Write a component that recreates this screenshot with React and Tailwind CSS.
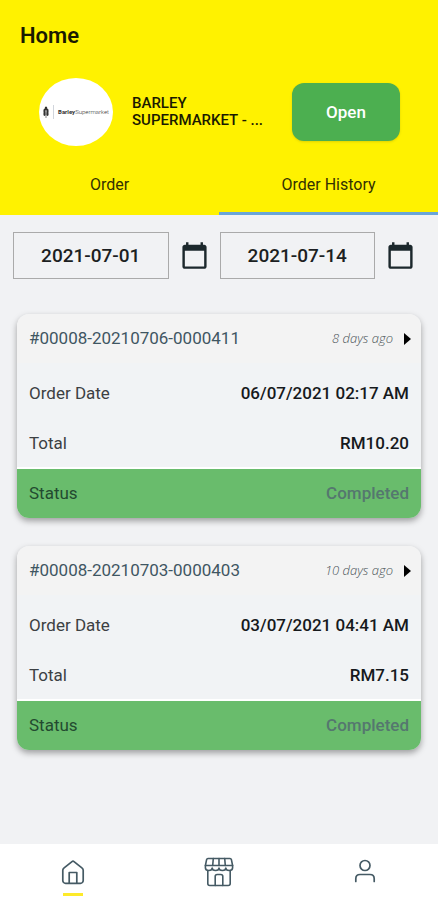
import { useState } from 'react';
import { MdCalendarToday } from 'react-icons/md';

const orders = [
  {
    id: '#00008-20210706-0000411',
    age: '8 days ago',
    date: '06/07/2021 02:17 AM',
    total: 'RM10.20',
    status: 'Completed',
  },
  {
    id: '#00008-20210703-0000403',
    age: '10 days ago',
    date: '03/07/2021 04:41 AM',
    total: 'RM7.15',
    status: 'Completed',
  },
];

const HomeIcon = () => (
  <svg viewBox="0 0 24 26" className="h-[26px] w-6" fill="none" stroke="currentColor" strokeWidth="1.7" strokeLinejoin="round" strokeLinecap="round">
    <path d="M1.800 11.200c0-.9.300-1.500 1-2L11 2.600a1.600 1.600 0 0 1 2 0l8.200 6.600c.7.5 1 1.100 1 2v10.300a2.800 2.800 0 0 1-2.800 2.800H4.600a2.800 2.800 0 0 1-2.800-2.800z" />
    <path d="M8.200 24V13.500h7.600V24" />
  </svg>
);

const StoreIcon = () => (
  <svg viewBox="0 0 30 30" className="size-[30px]" fill="none" stroke="currentColor" strokeWidth="1.6" strokeLinejoin="round" strokeLinecap="round">
    <path d="M4 1.500h22c.8 0 1.200.3 1.400 1.200l1.200 5.800H1.400l1.200-5.800C2.800 1.800 3.200 1.500 4 1.500z" />
    <path d="M9.300 1.500 8.700 8.500M15 1.500v7M20.700 1.500l.6 7" />
    <path d="M1.400 8.500v2.300c0 1.700 1.400 2.700 3.400 2.700s3.400-1 3.400-2.400c0 1.400 1.400 2.400 3.400 2.400s3.400-1 3.400-2.400c0 1.400 1.400 2.400 3.400 2.400s3.400-1 3.400-2.400c0 1.400 1.400 2.400 3.400 2.400s3.400-1 3.400-2.700V8.500" />
    <path d="M3.800 13.500v13c0 1.200.7 2 2 2h18.400c1.300 0 2-.8 2-2v-13" />
    <path d="M11.200 28.500V19.500a2 2 0 0 1 2-2h3.600a2 2 0 0 1 2 2v9" />
  </svg>
);

const UserIcon = () => (
  <svg viewBox="0 0 24 26" className="h-[26px] w-6" fill="none" stroke="currentColor" strokeWidth="1.7" strokeLinecap="round">
    <circle cx="12" cy="6.500" r="5" />
    <path d="M2.800 22.500v-2.800c0-2.600 1.600-4.200 4.200-4.200h10c2.600 0 4.200 1.600 4.200 4.200v2.800" />
  </svg>
);

const StoreLogo = () => (
  <div className="flex h-[68px] w-[74px] shrink-0 items-center justify-center gap-1 rounded-[50%] bg-white text-[#333]">
    <svg viewBox="0 0 6 12" className="h-3 w-1.5" fill="currentColor">
      <ellipse cx="3" cy="2.500" rx="1.300" ry="2" />
      <ellipse cx="1.500" cy="5" rx="1.100" ry="2.200" />
      <ellipse cx="4.500" cy="5" rx="1.100" ry="2.200" />
      <ellipse cx="1.500" cy="8" rx="1.100" ry="2" />
      <ellipse cx="4.500" cy="8" rx="1.100" ry="2" />
      <path d="M2.700 6h.6v6h-.6z" />
    </svg>
    <span className="h-3.5 w-px bg-gray-300" />
    <span className="text-[6px] leading-none font-light">
      <b className="font-bold">Barley</b>Supermarket
    </span>
  </div>
);

const Tab = ({ label, active, onClick }) => (
  <button
    type="button"
    role="tab"
    aria-selected={active}
    onClick={onClick}
    className={`h-[60px] flex-1 border-b-[3px] pt-0.5 text-base text-[#333000] ${active ? 'border-[#6aa5d8]' : 'border-transparent'}`}
  >
    {label}
  </button>
);

const DateField = ({ label, value, onChange }) => (
  <div className="flex flex-1 items-center gap-[13px]">
    <input
      type="text"
      aria-label={label}
      value={value}
      onChange={(e) => onChange(e.target.value)}
      className="h-[47px] w-full min-w-0 border border-[#aaa] text-center text-[19px] font-medium text-[#1c1f22]"
    />
    <button type="button" aria-label={`Pick ${label}`} className="-mx-0.5 shrink-0 text-[#1c282c]">
      <MdCalendarToday className="size-[29px]" />
    </button>
  </div>
);

const Row = ({ label, value }) => (
  <div className="flex h-[50px] items-center justify-between px-3">
    <dt className="text-[#3c4043]">{label}</dt>
    <dd className="font-medium text-[#16191c]">{value}</dd>
  </div>
);

const OrderCard = ({ order }) => (
  <article className="overflow-hidden rounded-xl bg-[#f1f3f5] text-[17px] shadow-[0_3px_6px_rgba(0,0,0,0.35)]">
    <header className="flex h-[49px] items-center bg-[#f3f3f3] pr-2.5 pl-3">
      <h2 className="flex-1 font-[450] text-[#3f5662]">{order.id}</h2>
      <time className="font-['Open_Sans',sans-serif] text-[13px] font-light text-[#4a5358] italic">{order.age}</time>
      <button type="button" aria-label={`Open order ${order.id}`} className="ml-[11px]">
        <svg viewBox="0 0 7 12" className="h-3 w-[7px]" fill="#000">
          <path d="M0 0l7 6-7 6z" />
        </svg>
      </button>
    </header>
    <dl className="pt-1.5">
      <Row label="Order Date" value={order.date} />
      <Row label="Total" value={order.total} />
      <div className="-mt-0.5 flex h-[51px] items-center justify-between border-t-2 border-white bg-[#69bc6c] px-3">
        <dt className="text-[#234a30]">Status</dt>
        <dd className="font-medium text-[#55776f]">{order.status}</dd>
      </div>
    </dl>
  </article>
);

const navItems = [
  { name: 'Home', icon: HomeIcon },
  { name: 'Store', icon: StoreIcon },
  { name: 'Account', icon: UserIcon },
];

const App = () => {
  const [tab, setTab] = useState('history');
  const [from, setFrom] = useState('2021-07-01');
  const [to, setTo] = useState('2021-07-14');

  return (
    <div className="flex min-h-screen flex-col bg-[#f1f2f4] font-[Roboto,sans-serif]">
      <header className="bg-[#fff200] text-[#1a1a00]">
        <h1 className="px-5 pt-[21px] text-[22px] leading-[30px] font-semibold">Home</h1>
        <div className="mt-[27px] flex items-center pr-[38px] pl-[39px]">
          <StoreLogo />
          <p className="ml-[19px] w-[134px] text-[15px] leading-[17px] font-medium">
            BARLEY SUPERMARKET - ...
          </p>
          <button type="button" className="ml-auto h-[58px] w-[108px] rounded-xl bg-[#4caf50] pt-0.5 text-[17px] font-medium text-white shadow">
            Open
          </button>
        </div>
        <div role="tablist" className="mt-[9px] flex">
          <Tab label="Order" active={tab === 'order'} onClick={() => setTab('order')} />
          <Tab label="Order History" active={tab === 'history'} onClick={() => setTab('history')} />
        </div>
      </header>

      <main className="flex-1">
        <div className="flex gap-[13px] pt-[17px] pr-[25px] pl-[13px]">
          <DateField label="start date" value={from} onChange={setFrom} />
          <DateField label="end date" value={to} onChange={setTo} />
        </div>
        <div className="flex flex-col gap-7 px-[17px] py-[35px]">
          {orders.map((order) => (
            <OrderCard key={order.id} order={order} />
          ))}
        </div>
      </main>

      <nav className="flex h-14 bg-white text-[#455a64]">
        {navItems.map(({ name, icon: Icon }, i) => (
          <a key={name} href="#" aria-label={name} className="flex flex-1 flex-col items-center">
            <span className="flex h-[49px] items-center pt-1.5">
              <Icon />
            </span>
            {i === 0 && <span className="h-[3px] w-5 bg-[#fdea2a]" />}
          </a>
        ))}
      </nav>
    </div>
  );
};

export default App;
